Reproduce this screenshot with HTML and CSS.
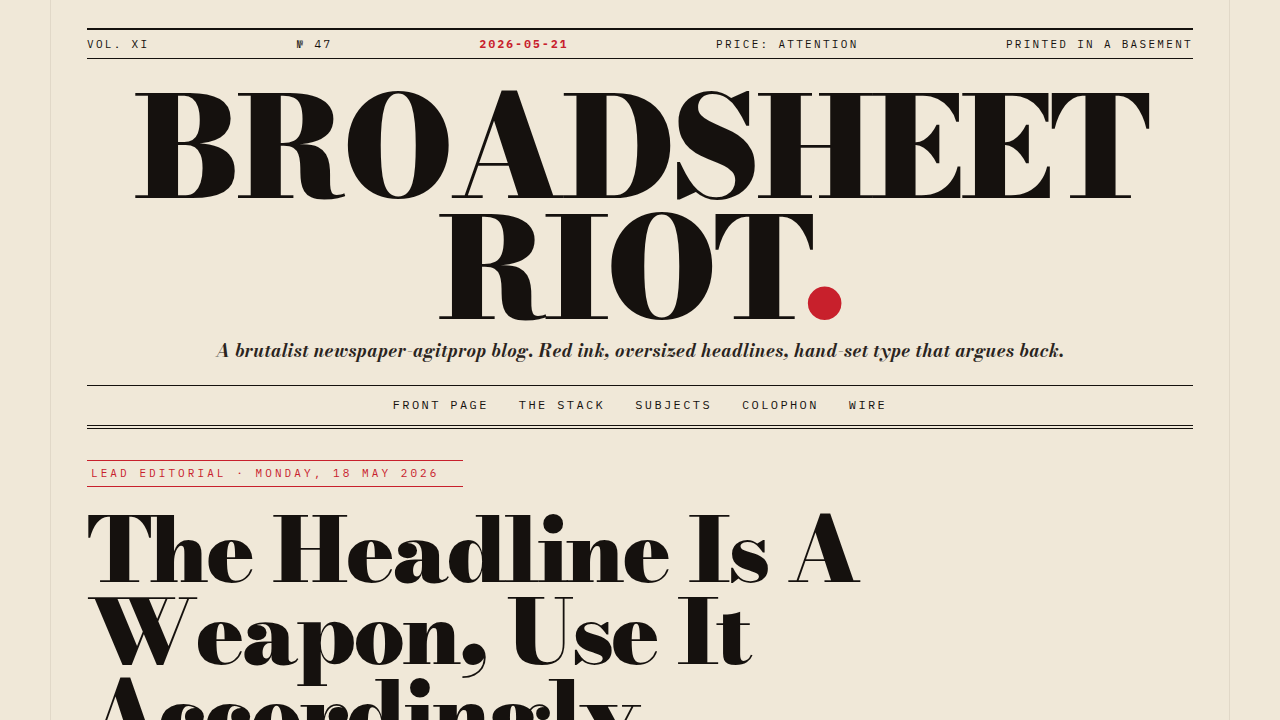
FILE: index.html
```html
<!DOCTYPE html>
<html lang="en">
<head>
    <meta charset="UTF-8">
    <meta name="viewport" content="width=device-width, initial-scale=1.0">
    <title>Broadsheet Riot</title>
    <link rel="stylesheet" href="styles.css">
</head>
<body>
<div class="sheet">
    <header class="masthead">
        <div class="meta">
            <span>Vol. XI</span>
            <span>№ 47</span>
            <time class="date" datetime="2026-05-21">2026-05-21</time>
            <span>Price: Attention</span>
            <span>Printed in a basement</span>
        </div>
        <h1 class="title">Broadsheet Riot<span class="stop">.</span></h1>
        <p class="tagline">A brutalist newspaper-agitprop blog. Red ink, oversized headlines, hand-set type that argues back.</p>
        <nav class="nav">
            <a href="#front">Front page</a>
            <a href="#stack">The stack</a>
            <a href="#subjects">Subjects</a>
            <a href="#colophon">Colophon</a>
            <a href="#wire">Wire</a>
        </nav>
    </header>
    <main>
        <article class="lead" id="front">
            <p class="kicker">Lead editorial · Monday, 18 May 2026</p>
            <h2 class="headline">The Headline Is A Weapon, Use It Accordingly</h2>
        </article>
    </main>
</div>
</body>
</html>
```
FILE: styles.css
```css
:root {
    --paper: #f0e8d8;
    --ink: #15110e;
    --red: #c8202c;
    --display: "Bodoni Moda", "Liberation Serif", serif;
    --mono: "IBM Plex Mono", "Liberation Mono", monospace;
}
* {
    box-sizing: border-box;
}
body {
    margin: 0;
    background-color: var(--paper);
    color: var(--ink);
    font-family: var(--display);
}
.sheet {
    max-width: 1180px;
    min-height: 100vh;
    margin: 0 auto;
    padding: 28px 36px;
    border-left: 1px solid #e1d8c8;
    border-right: 1px solid #e1d8c8;
}
.meta {
    display: flex;
    justify-content: space-between;
    padding: 7px 0;
    border-top: 2px solid var(--ink);
    border-bottom: 1px solid var(--ink);
    font-family: var(--mono);
    font-size: 11px;
    line-height: 14px;
    letter-spacing: 0.21em;
    text-transform: uppercase;
}
.date {
    color: var(--red);
    font-weight: 700;
}
.title {
    margin: 28px 0 0;
    font-size: 140px;
    font-weight: 900;
    font-variation-settings: "opsz" 96;
    line-height: 121px;
    letter-spacing: -0.03em;
    text-align: center;
    text-transform: uppercase;
}
.stop {
    color: var(--red);
}
.tagline {
    margin: 10px 0 22px;
    color: #2a2420;
    font-size: 18px;
    font-style: italic;
    font-weight: 700;
    line-height: 24px;
    letter-spacing: 0.02em;
    text-align: center;
}
.nav {
    display: flex;
    justify-content: center;
    flex-wrap: wrap;
    gap: 30px;
    padding: 11px 0 13px;
    border-top: 1px solid var(--ink);
    border-bottom: 4px double var(--ink);
    font-family: var(--mono);
    font-size: 12px;
    line-height: 15px;
    letter-spacing: 0.2em;
    text-transform: uppercase;
}
.nav a {
    color: inherit;
    text-decoration: none;
}
.lead {
    padding-top: 30px;
}
.kicker {
    display: inline-block;
    margin: 0;
    padding: 5px 24px 5px 4px;
    border-top: 1px solid var(--red);
    border-bottom: 1px solid var(--red);
    color: var(--red);
    font-family: var(--mono);
    font-size: 11px;
    line-height: 15px;
    letter-spacing: 0.28em;
    text-transform: uppercase;
}
.headline {
    max-width: 820px;
    margin: 22px 0 0;
    font-size: 90px;
    font-weight: 900;
    font-variation-settings: "opsz" 96;
    line-height: 82px;
    letter-spacing: -0.03em;
}
```
